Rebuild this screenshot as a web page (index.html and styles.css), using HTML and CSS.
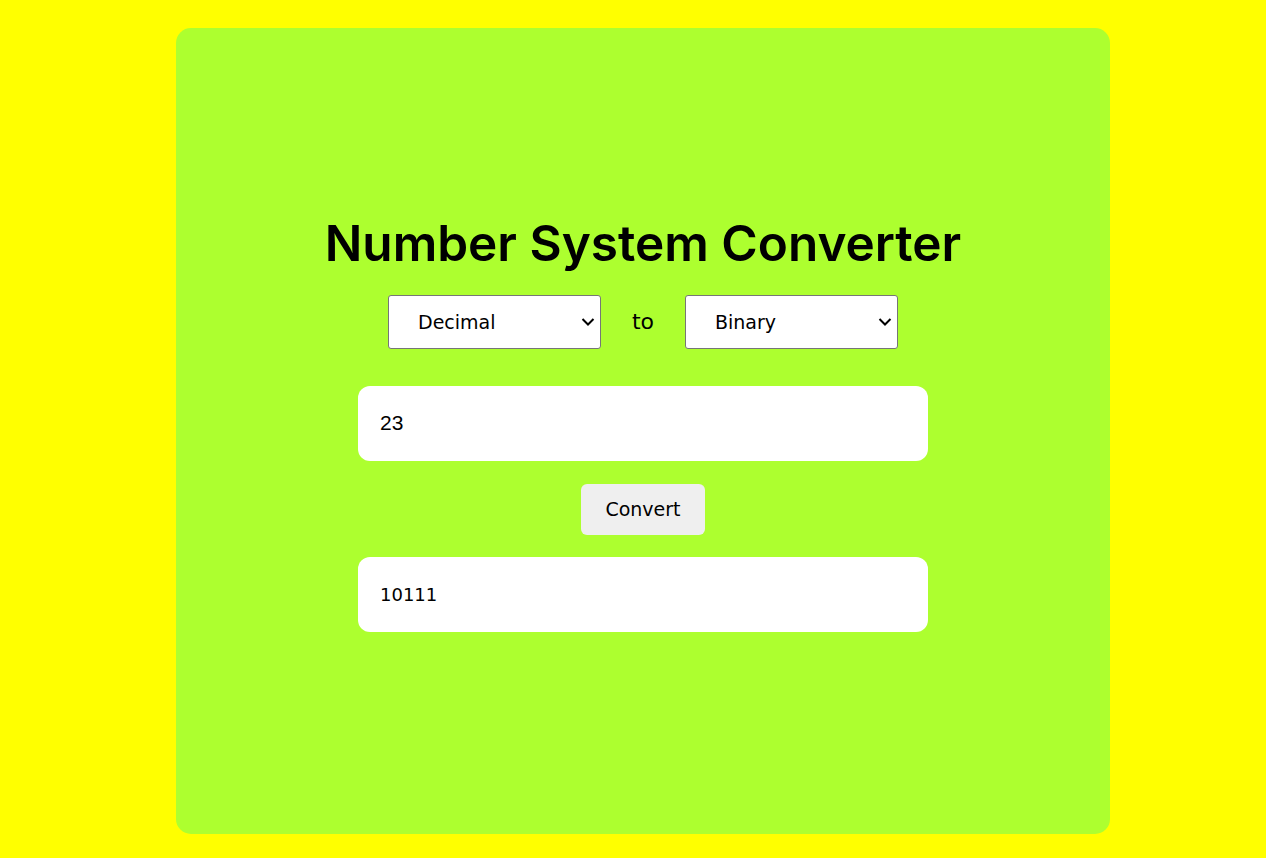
FILE: index.html
```html
<!DOCTYPE html>
<html lang="en">
<head>
<meta charset="utf-8">
<title>Number System Converter</title>
<link rel="stylesheet" href="styles.css">
</head>
<body>
<div class="card">
  <h1 class="title">Number System Converter</h1>
  <div class="row">
    <div class="sel-wrap">
      <select class="sel">
        <option>Decimal</option>
        <option>Binary</option>
        <option>Octal</option>
        <option>Hexadecimal</option>
      </select>
      <svg class="chev" width="14" height="8" viewBox="0 0 14 8"><path d="M1.5 1 L7 6.5 L12.5 1" fill="none" stroke="#000" stroke-width="2"/></svg>
    </div>
    <span class="to">to</span>
    <div class="sel-wrap">
      <select class="sel">
        <option>Binary</option>
        <option>Decimal</option>
        <option>Octal</option>
        <option>Hexadecimal</option>
      </select>
      <svg class="chev" width="14" height="8" viewBox="0 0 14 8"><path d="M1.5 1 L7 6.5 L12.5 1" fill="none" stroke="#000" stroke-width="2"/></svg>
    </div>
  </div>
  <input class="field field-in" type="text" value="23">
  <button class="btn" type="button">Convert</button>
  <input class="field field-out" type="text" value="10111" readonly>
</div>
</body>
</html>
```

FILE: styles.css
```css
html, body {
  margin: 0;
  padding: 0;
}
body {
  background: #ffff00;
  font-family: "DejaVu Sans", "Noto Sans", sans-serif;
  padding-top: 28px;
  height: 830px;
}
.card {
  width: 934px;
  height: 806px;
  margin-left: 176px;
  background: #adff2f;
  border-radius: 15px;
  display: flex;
  flex-direction: column;
  align-items: center;
  justify-content: center;
  box-sizing: border-box;
  padding-bottom: 24px;
}
.title {
  margin: 0;
  font-family: Inter, "DejaVu Sans", sans-serif;
  font-size: 49.5px;
  font-weight: 600;
  line-height: 72px;
  color: #000;
}
.row {
  margin-top: 16px;
  display: flex;
  align-items: center;
  gap: 30px;
}
.sel-wrap {
  position: relative;
  width: 213px;
  height: 54px;
}
.sel {
  -webkit-appearance: none;
  appearance: none;
  width: 213px;
  height: 54px;
  box-sizing: border-box;
  padding: 0 30px 0 29px;
  font-family: inherit;
  font-size: 19px;
  color: #000;
  background: #fff;
  border: 1px solid #767676;
  border-radius: 3px;
}
.chev {
  position: absolute;
  right: 6px;
  top: 23px;
  pointer-events: none;
}
.to {
  width: 24px;
  text-align: center;
  font-size: 22px;
  color: #000;
}
.field {
  width: 570px;
  height: 75px;
  box-sizing: border-box;
  border: none;
  border-radius: 12px;
  background: #fff;
  padding: 0 22px;
  font-size: 18px;
  color: #000;
  outline: none;
}
.field-in {
  margin-top: 37px;
  font-family: "Liberation Sans", Arial, sans-serif;
  font-size: 21px;
}
.field-out {
  margin-top: 22px;
  font-family: "DejaVu Sans", sans-serif;
}
.btn {
  margin-top: 23px;
  width: 124px;
  height: 51px;
  border: none;
  border-radius: 6px;
  background: #efefef;
  font-family: inherit;
  font-size: 19px;
  color: #000;
}
```
